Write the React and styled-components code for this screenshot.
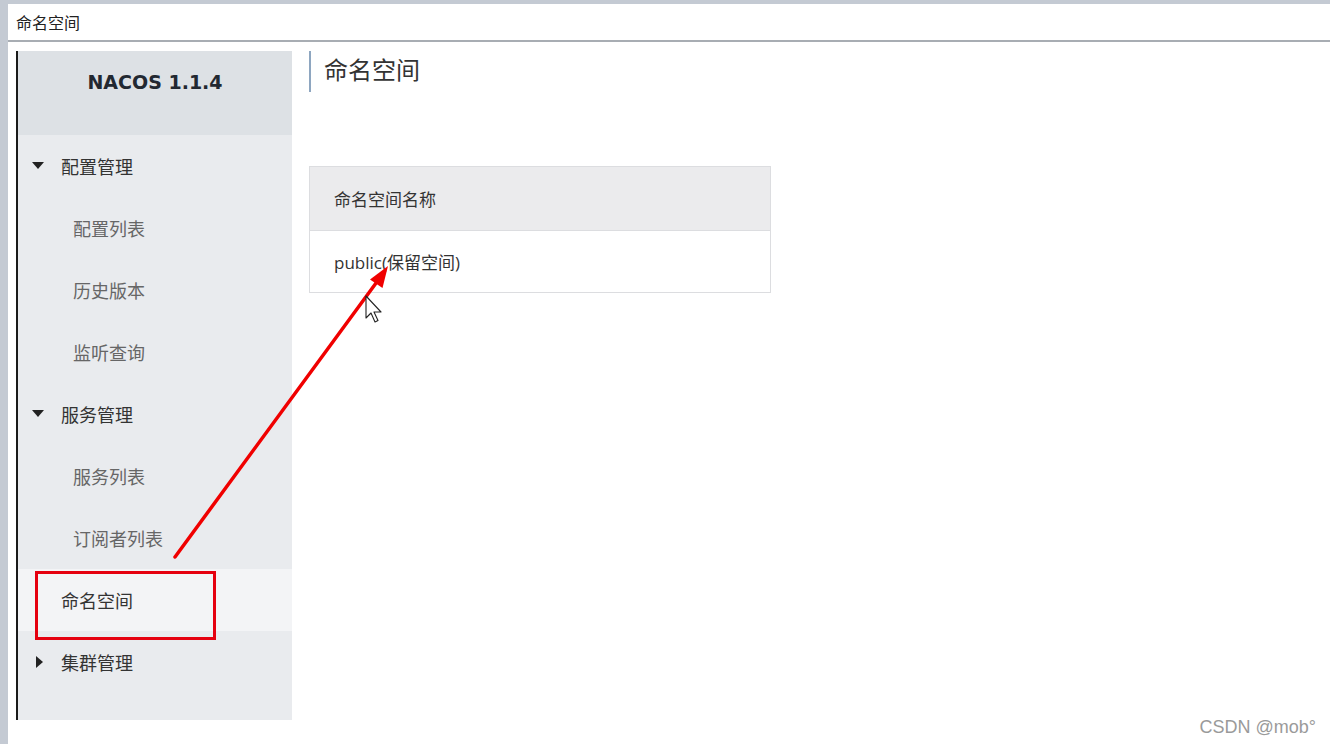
import styled, { createGlobalStyle } from "styled-components";

const GlobalStyle = createGlobalStyle`
	html, body {
		margin: 0;
		padding: 0;
		background: #c4cad3;
		font-family: "Noto Sans CJK SC", "Noto Sans", sans-serif;
	}
`;

const menu = [
	{ label: "配置管理", group: true, open: true },
	{ label: "配置列表" },
	{ label: "历史版本" },
	{ label: "监听查询" },
	{ label: "服务管理", group: true, open: true },
	{ label: "服务列表" },
	{ label: "订阅者列表" },
	{ label: "命名空间", active: true },
	{ label: "集群管理", group: true, open: false },
];

export default function App() {
	return (
		<Screen>
			<GlobalStyle />
			<Window>
				<TitleBar>命名空间</TitleBar>
				<Body>
					<Sidebar>
						<Brand>NACOS 1.1.4</Brand>
						<Menu>
							{menu.map((item) => (
								<MenuItem
									key={item.label}
									$group={item.group}
									$active={item.active}
								>
									{item.group && <Caret $open={item.open} />}
									{item.label}
								</MenuItem>
							))}
						</Menu>
					</Sidebar>
					<Main>
						<PageTitle>命名空间</PageTitle>
						<Table>
							<HeadRow>命名空间名称</HeadRow>
							<Row>public(保留空间)</Row>
						</Table>
					</Main>
				</Body>
			</Window>

			<HighlightBox />
			<Overlay width="1330" height="744" viewBox="0 0 1330 744">
				<line
					x1="175"
					y1="557"
					x2="379"
					y2="279"
					stroke="#f00000"
					strokeWidth="3.5"
					strokeLinecap="round"
				/>
				<polygon points="388,266 382.5,288 370,279.5" fill="#f00000" />
				<path
					d="M366 296 L366 318 L371 313 L375 322 L378 320.5 L374 312 L381 312 Z"
					fill="#fff"
					stroke="#222"
					strokeWidth="1.1"
					strokeLinejoin="round"
				/>
			</Overlay>
			<Watermark>CSDN @mob°</Watermark>
		</Screen>
	);
}

const Screen = styled.div`
	position: relative;
	width: 1330px;
	height: 744px;
	overflow: hidden;
`;

const Window = styled.div`
	margin: 4px 0 0 8px;
	height: 740px;
	background: #fff;
	display: flex;
	flex-direction: column;
`;

const TitleBar = styled.div`
	height: 36px;
	display: flex;
	align-items: center;
	padding-left: 8px;
	font-size: 16px;
	color: #222;
	border-bottom: 2px solid #a8adb3;
`;

const Body = styled.div`
	display: flex;
	padding: 9px 0 0 8px;
`;

const Sidebar = styled.aside`
	width: 274px;
	height: 669px;
	border-left: 2px solid #1a1a1a;
	background: #e9ebee;
	display: flex;
	flex-direction: column;
`;

const Brand = styled.div`
	height: 84px;
	box-sizing: border-box;
	padding-top: 17px;
	background: #dde1e5;
	text-align: center;
	font-family: "DejaVu Sans", Verdana, sans-serif;
	font-weight: 700;
	font-size: 19px;
	line-height: 28px;
	color: #222831;
`;

const Menu = styled.ul`
	list-style: none;
	margin: 0;
	padding: 0;
`;

const MenuItem = styled.li`
	position: relative;
	height: 62px;
	display: flex;
	align-items: center;
	padding-left: ${(p) => (p.$group || p.$active ? "43px" : "55px")};
	font-size: 18px;
	color: ${(p) => (p.$group || p.$active ? "#333" : "#666")};
	background: ${(p) => (p.$active ? "#f3f4f6" : "transparent")};
`;

const Caret = styled.span`
	position: absolute;
	left: ${(p) => (p.$open ? "14px" : "18px")};
	top: 50%;
	width: 0;
	height: 0;
	border-style: solid;
	${(p) =>
		p.$open
			? `
		margin-top: -4px;
		border-width: 7px 6px 0 6px;
		border-color: #222 transparent transparent transparent;
	`
			: `
		margin-top: -6px;
		border-width: 6px 0 6px 7px;
		border-color: transparent transparent transparent #222;
	`}
`;

const Main = styled.main`
	flex: 1;
	padding-left: 17px;
`;

const PageTitle = styled.h1`
	margin: 0;
	height: 41px;
	box-sizing: border-box;
	padding: 1px 0 0 13px;
	line-height: 34px;
	border-left: 2px solid #8ea6c0;
	font-size: 24px;
	font-weight: 400;
	color: #333;
`;

const Table = styled.div`
	margin-top: 74px;
	width: 460px;
	border: 1px solid #dcdde0;
`;

const HeadRow = styled.div`
	height: 63px;
	display: flex;
	align-items: center;
	padding-left: 24px;
	background: #ebebed;
	border-bottom: 1px solid #dcdde0;
	font-size: 17px;
	color: #333;
`;

const Row = styled.div`
	height: 61px;
	display: flex;
	align-items: center;
	padding-left: 24px;
	font-size: 17px;
	color: #333;
	font-family: "Open Sans", "Noto Sans CJK SC", sans-serif;
`;

const HighlightBox = styled.div`
	position: absolute;
	left: 35px;
	top: 571px;
	width: 175px;
	height: 63px;
	border: 3px solid #e5000f;
`;

const Overlay = styled.svg`
	position: absolute;
	left: 0;
	top: 0;
	pointer-events: none;
`;

const Watermark = styled.div`
	position: absolute;
	right: 14px;
	bottom: 6px;
	font-family: "Liberation Sans", Arial, sans-serif;
	font-size: 18px;
	color: #9a9a9a;
`;
